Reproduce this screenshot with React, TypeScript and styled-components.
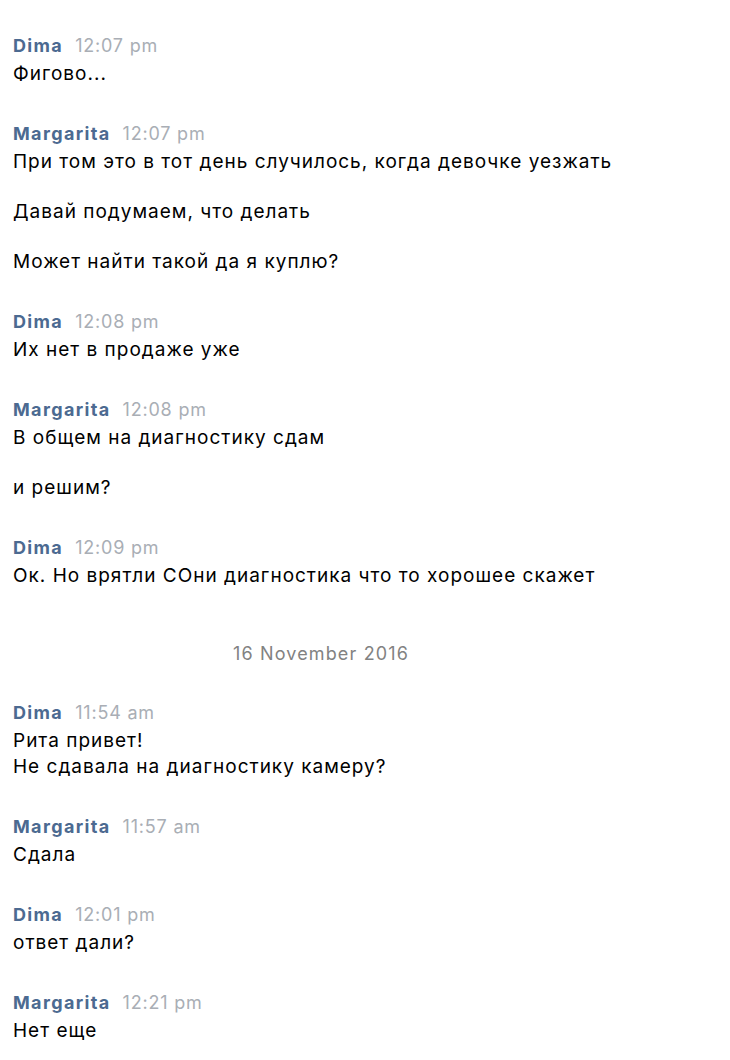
import React from "react";
import styled, { createGlobalStyle } from "styled-components";

const Global = createGlobalStyle`
  html, body { margin: 0; padding: 0; background: #ffffff; }
  body { font-family: Inter, "Liberation Sans", Arial, sans-serif; -webkit-font-smoothing: antialiased; }
`;

const Feed = styled.div`
  display: flex;
  flex-direction: column;
  gap: 37px;
  width: 616px;
  padding: 36px 0 0 13px;
`;

const Group = styled.section`
  display: flex;
  flex-direction: column;
`;

const Header = styled.div`
  display: flex;
  align-items: baseline;
  gap: 12px;
  height: 20px;
  line-height: 20px;
  margin-bottom: 5px;
`;

const Name = styled.span`
  font-size: 18px;
  font-weight: 700;
  letter-spacing: 1.35px;
  color: #4c6a91;
`;

const Time = styled.span`
  font-size: 18px;
  letter-spacing: 0.8px;
  color: #a9aeb5;
`;

const Messages = styled.div`
  display: flex;
  flex-direction: column;
  gap: 24px;
`;

const Text = styled.div`
  font-size: 19px;
  line-height: 26px;
  letter-spacing: 1px;
  color: #000;
`;

const DateSep = styled.div`
  margin-top: 18px;
  margin-bottom: 2px;
  text-align: center;
  font-size: 18px;
  letter-spacing: 1.15px;
  line-height: 20px;
  color: #828282;
`;

type Msg =
  | { kind: "group"; name: string; time: string; texts: string[][] }
  | { kind: "date"; label: string };

const feed: Msg[] = [
  { kind: "group", name: "Dima", time: "12:07 pm", texts: [["Фигово..."]] },
  {
    kind: "group",
    name: "Margarita",
    time: "12:07 pm",
    texts: [
      ["При том это в тот день случилось, когда девочке уезжать"],
      ["Давай подумаем, что делать"],
      ["Может найти такой да я куплю?"],
    ],
  },
  { kind: "group", name: "Dima", time: "12:08 pm", texts: [["Их нет в продаже уже"]] },
  {
    kind: "group",
    name: "Margarita",
    time: "12:08 pm",
    texts: [["В общем на диагностику сдам"], ["и решим?"]],
  },
  {
    kind: "group",
    name: "Dima",
    time: "12:09 pm",
    texts: [["Ок. Но врятли СОни диагностика что то хорошее скажет"]],
  },
  { kind: "date", label: "16 November 2016" },
  {
    kind: "group",
    name: "Dima",
    time: "11:54 am",
    texts: [["Рита привет!", "Не сдавала на диагностику камеру?"]],
  },
  { kind: "group", name: "Margarita", time: "11:57 am", texts: [["Сдала"]] },
  { kind: "group", name: "Dima", time: "12:01 pm", texts: [["ответ дали?"]] },
  { kind: "group", name: "Margarita", time: "12:21 pm", texts: [["Нет еще"]] },
];

export default function App() {
  return (
    <>
      <Global />
      <Feed>
        {feed.map((item, i) =>
          item.kind === "date" ? (
            <DateSep key={i}>{item.label}</DateSep>
          ) : (
            <Group key={i}>
              <Header>
                <Name>{item.name}</Name>
                <Time>{item.time}</Time>
              </Header>
              <Messages>
                {item.texts.map((lines, j) => (
                  <Text key={j}>
                    {lines.map((l, k) => (
                      <div key={k}>{l}</div>
                    ))}
                  </Text>
                ))}
              </Messages>
            </Group>
          )
        )}
      </Feed>
    </>
  );
}
